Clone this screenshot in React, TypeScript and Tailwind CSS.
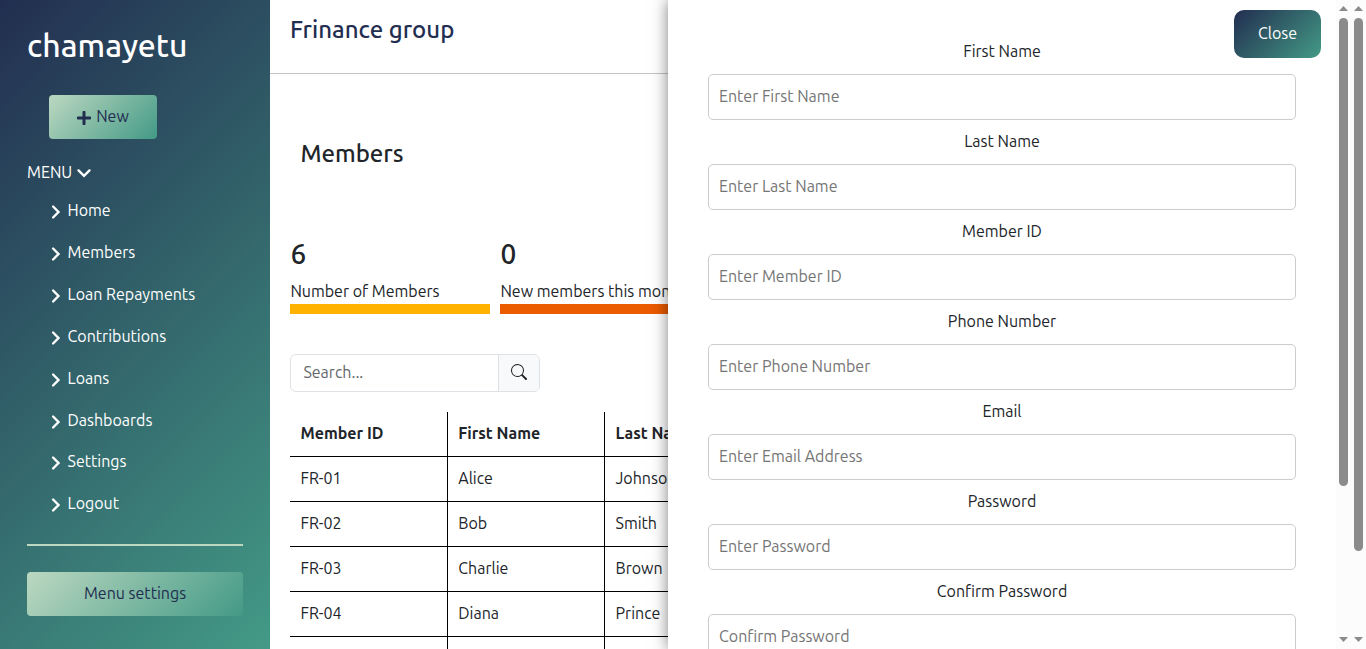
import { FaPlus } from "react-icons/fa";
import { BsSearch } from "react-icons/bs";

const menu: [string, string][] = [
  ["Home", "h-[42px]"],
  ["Members", "h-[42px]"],
  ["Loan Repayments", "h-[42px]"],
  ["Contributions", "h-[42px]"],
  ["Loans", "h-[42px]"],
  ["Dashboards", "h-[41px]"],
  ["Settings", "h-[42px]"],
  ["Logout", "h-[42px]"],
];

const members = [
  ["FR-01", "Alice", "Johnson"],
  ["FR-02", "Bob", "Smith"],
  ["FR-03", "Charlie", "Brown"],
  ["FR-04", "Diana", "Prince"],
  ["", "", ""],
];

const fields = [
  ["First Name", "Enter First Name"],
  ["Last Name", "Enter Last Name"],
  ["Member ID", "Enter Member ID"],
  ["Phone Number", "Enter Phone Number"],
  ["Email", "Enter Email Address"],
  ["Password", "Enter Password"],
  ["Confirm Password", "Confirm Password"],
];

function Chevron({ d, className }: { d: string; className: string }) {
  return (
    <svg className={`size-4 ${className}`} viewBox="0 0 16 16" fill="none" stroke="currentColor" strokeWidth="2.4" strokeLinecap="round">
      <path d={d} />
    </svg>
  );
}

function Sidebar() {
  return (
    <aside className="flex h-full w-[270px] shrink-0 flex-col bg-[linear-gradient(135deg,#222e50,#439a86)] px-[27px] text-white">
      <h1 className="mt-[26px] h-[38px] text-[32px] leading-[38px] font-medium">chamayetu</h1>
      <button className="mt-[31px] ml-[22px] flex h-11 w-[108px] items-center justify-center gap-[5px] rounded bg-[linear-gradient(135deg,#bcd8c1,#439a86)] pb-[2px] text-[#222e50]">
        <FaPlus className="mt-[4px] h-4 w-[14px]" />
        <span>New</span>
      </button>
      <div className="mt-[21px] flex h-6 items-center gap-1">
        <span>MENU</span>
        <Chevron d="M2.5 5.4L8 10.8L13.5 5.4" className="mt-px" />
      </div>
      <nav className="mt-[5px]">
        {menu.map(([label, h]) => (
          <a key={label} className={`flex items-center gap-[4.5px] pl-[20px] ${h}`}>
            <Chevron d="M6.1 2.5L11.5 8L6.1 13.5" className="mt-[4px]" />
            <span>{label}</span>
          </a>
        ))}
      </nav>
      <hr className="mt-[20px] border-t-2 border-[#bcd8c1]" />
      <button className="mt-[26px] h-11 rounded bg-[linear-gradient(135deg,#bcd8c1,#439a86)] pb-[2px] text-[#222e50]">
        Menu settings
      </button>
    </aside>
  );
}

function Stat({ value, label, bar }: { value: string; label: string; bar: string }) {
  return (
    <div className="w-[200px] shrink-0">
      <div className="h-[34px] pl-[0.4px] text-[28px] leading-[34px] font-medium">{value}</div>
      <div className="mt-2 h-6 pl-[0.4px] whitespace-nowrap">{label}</div>
      <div className={`mt-px h-[10px] ${bar}`} />
    </div>
  );
}

function Content() {
  return (
    <main className="w-[1081px] shrink-0">
      <header className="h-[74px] border-b border-[#c4c4c4] px-5 pt-[15px]">
        <h2 className="text-2xl leading-[29px] font-medium text-[#222e50]">Frinance group</h2>
      </header>
      <h3 className="mt-[65px] ml-[30px] pl-[0.4px] text-2xl leading-[29px] font-medium">Members</h3>
      <section className="mt-[69px] ml-5 flex gap-[10px]">
        <Stat value="6" label="Number of Members" bar="bg-[#ffb200]" />
        <Stat value="0" label="New members this month" bar="bg-[#eb5b00]" />
      </section>
      <div className="mt-10 ml-5 flex h-[38px] w-[250px] overflow-hidden rounded-md border border-[#dee2e6]">
        <input className="min-w-0 flex-1 pr-3 pb-[2px] pl-[12.4px] placeholder:text-[#62676b]" placeholder="Search..." />
        <button className="flex w-[41px] items-center justify-center border-l border-[#dee2e6] bg-[#f8f9fa] pb-[2px]">
          <BsSearch className="size-4" />
        </button>
      </div>
      <table className="mt-5 ml-5 w-[944px] table-fixed border-collapse">
        <thead>
          <tr className="h-11 text-left">
            {["Member ID", "First Name", "Last Name", "Phone", "Email", "Role"].map((h) => (
              <th key={h} className="border-r border-b border-black pr-[10px] pb-px pl-[10.5px] font-bold">{h}</th>
            ))}
          </tr>
        </thead>
        <tbody>
          {members.map((row, r) => (
            <tr key={r} className="h-[45px]">
              {[...row, "", "", ""].map((cell, i) => (
                <td key={i} className="border-r border-b border-black pr-[10px] pb-[2px] pl-[10.5px]">{cell}</td>
              ))}
            </tr>
          ))}
        </tbody>
      </table>
    </main>
  );
}

function Scrollbar({ thumb }: { thumb: string }) {
  return (
    <div className="relative z-10 flex h-full w-[15px] shrink-0 flex-col items-center bg-[#fcfcfc] text-[#8b8b8b]">
      <svg className="mt-[6px] h-[5px] w-[9px]" viewBox="0 0 9 5"><path d="M4.5 0L9 5H0z" fill="currentColor" /></svg>
      <div className={`mt-[7px] w-[9px] rounded-full bg-[#8b8b8b] ${thumb}`} />
      <svg className="mt-auto mb-[7px] h-[5px] w-[9px]" viewBox="0 0 9 5"><path d="M0 0H9L4.5 5z" fill="currentColor" /></svg>
    </div>
  );
}

function MemberForm() {
  return (
    <section className="absolute top-0 right-[15px] flex h-full w-[683px] bg-white shadow-[0_0_15px_rgba(0,0,0,0.5)]">
      <form className="h-full flex-1 overflow-hidden px-10 pt-[39px]">
        {fields.map(([label, hint]) => (
          <label key={label} className="flex h-[90px] flex-col">
            <span className="h-6 text-center">{label}</span>
            <input
              placeholder={hint}
              className="mt-[11px] h-[46px] rounded-[5px] border border-[#ccc] px-[10px] pb-[2px] placeholder:text-[#757575]"
            />
          </label>
        ))}
      </form>
      <button className="absolute top-[10px] right-[30px] h-12 w-[87px] rounded-[10px] bg-[linear-gradient(135deg,#222e50,#439a86)] pb-[2px] text-white">
        Close
      </button>
      <Scrollbar thumb="h-[468px]" />
    </section>
  );
}

export default function App() {
  return (
    <div className="relative flex h-[649px] w-[1366px] overflow-hidden bg-white font-['Ubuntu','Noto_Sans',sans-serif] text-base font-normal text-[#212529]">
      <Sidebar />
      <Content />
      <Scrollbar thumb="h-[533px]" />
      <MemberForm />
    </div>
  );
}
